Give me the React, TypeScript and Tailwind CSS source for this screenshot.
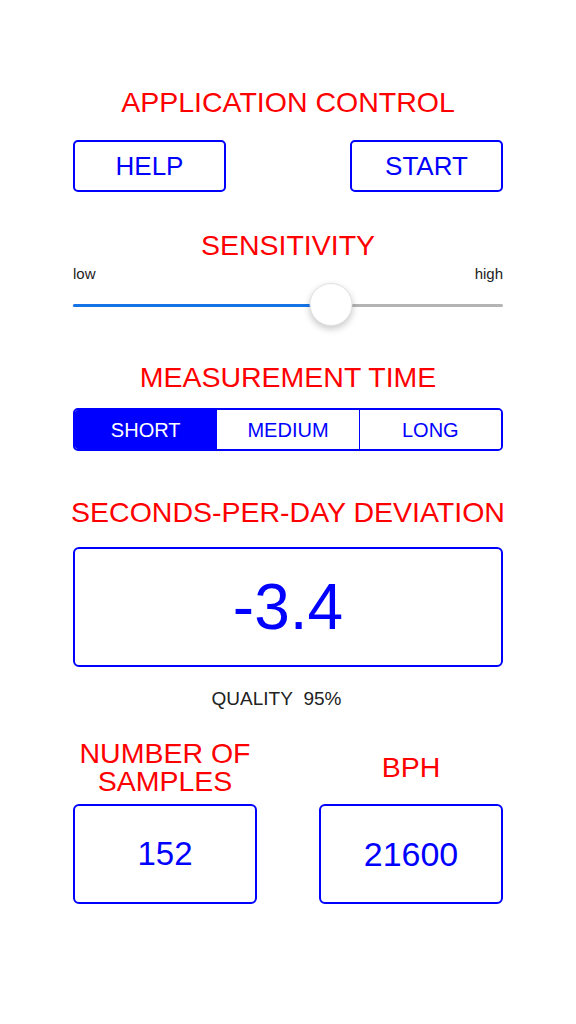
import { useState } from "react";

const font = { fontFamily: '"Liberation Sans", Arial, sans-serif' };

function Title({ children, className = "" }: { children: React.ReactNode; className?: string }) {
  return (
    <h2 className={`whitespace-nowrap text-center text-[28.5px] leading-[29px] text-[#ff0000] ${className}`}>
      {children}
    </h2>
  );
}

export default function App() {
  const [mode, setMode] = useState("SHORT");
  const sensitivity = 0.6;

  return (
    <div style={font} className="min-h-[1024px] w-[576px] bg-white px-[73px] flex flex-col">
      <Title className="mt-[88px]">APPLICATION CONTROL</Title>

      {/* buttons */}
      <div className="mt-[23px] flex justify-between">
        <button className="h-[52px] w-[153px] rounded-[5px] border-2 border-[#0000ff] text-[26px] text-[#0000ff]">
          HELP
        </button>
        <button className="h-[52px] w-[153px] rounded-[5px] border-2 border-[#0000ff] text-[26px] text-[#0000ff]">
          START
        </button>
      </div>

      <Title className="mt-[39px]">SENSITIVITY</Title>
      <div className="mt-[6px] flex justify-between text-[15px] leading-[15px] text-[#222]">
        <span>low</span>
        <span>high</span>
      </div>

      {/* slider */}
      <div className="relative mt-[2px] h-[44px]">
        <div className="absolute left-0 right-0 top-[20.5px] h-[3px] rounded-full bg-[#b4b4b4]" />
        <div
          className="absolute left-0 top-[20.5px] h-[3px] rounded-full bg-[#1473e6]"
          style={{ width: `${sensitivity * 100}%` }}
        />
        <div
          className="absolute top-0 h-[43px] w-[43px] -translate-x-1/2 rounded-full border border-[#e2e2e2] bg-white shadow-[0_3px_7px_rgba(0,0,0,0.22)]"
          style={{ left: `${sensitivity * 100}%` }}
        />
      </div>

      <Title className="mt-[36px]">MEASUREMENT TIME</Title>
      <div className="mt-[16px] flex h-[43px] overflow-hidden rounded-[5px] border-2 border-[#0000ff]">
        {["SHORT", "MEDIUM", "LONG"].map((m, i) => (
          <button
            key={m}
            onClick={() => setMode(m)}
            className={`flex-1 text-[20px] ${i > 0 ? "border-l border-[#0000ff]" : ""} ${
              mode === m ? "bg-[#0000ff] text-white" : "bg-white text-[#0000ff]"
            }`}
          >
            {m}
          </button>
        ))}
      </div>

      <Title className="-mx-[6px] mt-[47px]">SECONDS-PER-DAY DEVIATION</Title>
      <div className="mt-[20px] flex h-[120px] items-center justify-center rounded-[6px] border-2 border-[#0000ff]">
        <span className="text-[64px] text-[#0000ff]">-3.4</span>
      </div>
      <div className="mt-[22px] pr-[23px] text-center text-[19px] leading-[19px] text-[#222]">
        QUALITY&nbsp;&nbsp;95%
      </div>

      {/* samples / bph */}
      <div className="mt-[31px] flex justify-between">
        <div className="flex w-[184px] flex-col">
          <Title className="-mx-[6px] flex h-[56px] flex-col items-center justify-center !leading-[28px]">
            <span>NUMBER OF</span>
            <span>SAMPLES</span>
          </Title>
          <div className="mt-[9px] flex h-[100px] items-center justify-center rounded-[6px] border-2 border-[#0000ff]">
            <span className="text-[33px] text-[#0000ff]">152</span>
          </div>
        </div>
        <div className="flex w-[184px] flex-col">
          <Title className="flex h-[56px] items-center justify-center">BPH</Title>
          <div className="mt-[9px] flex h-[100px] items-center justify-center rounded-[6px] border-2 border-[#0000ff]">
            <span className="text-[34px] text-[#0000ff]">21600</span>
          </div>
        </div>
      </div>
    </div>
  );
}
